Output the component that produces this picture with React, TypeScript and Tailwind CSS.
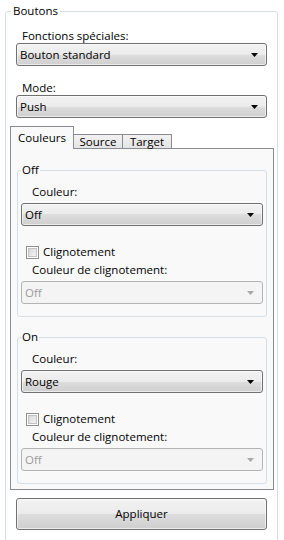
import React from 'react';

function Arrow({ disabled }: { disabled?: boolean }) {
  return (
    <svg width="7" height="4" viewBox="0 0 7 4" className="shrink-0">
      <polygon points="0,0 7,0 3.5,4" fill={disabled ? '#a8a8a8' : '#000'} />
    </svg>
  );
}

function Combo({ value, disabled }: { value: string; disabled?: boolean }) {
  if (disabled) {
    return (
      <div className="flex h-[23px] items-center justify-between rounded-[3px] border border-[#b3b3b3] bg-[#f4f4f4] pl-[3px] pr-[8px] text-[#9c9c9c]">
        <span>{value}</span>
        <Arrow disabled />
      </div>
    );
  }
  return (
    <div className="flex h-[23px] items-center justify-between rounded-[3px] border border-[#707070] bg-[linear-gradient(180deg,#f2f2f2_0%,#ebebeb_50%,#dddddd_50%,#cfcfcf_100%)] pl-[3px] pr-[8px] shadow-[inset_0_0_0_1px_rgba(255,255,255,0.6)]">
      <span>{value}</span>
      <Arrow />
    </div>
  );
}

function CheckBox({ label }: { label: string }) {
  return (
    <div className="flex h-[16px] items-center gap-[4px] pl-[5px] leading-[16px]">
      <div className="flex h-[13px] w-[13px] items-center justify-center border border-[#8e8f8f] bg-white">
        <div className="h-[9px] w-[9px] border border-[#c2c2c2] bg-[linear-gradient(135deg,#d8d8d8_0%,#f4f4f4_100%)]" />
      </div>
      <span>{label}</span>
    </div>
  );
}

function ColorGroup({ title, color }: { title: string; color: string }) {
  return (
    <fieldset className="mx-[6px] rounded-[3px] border border-[#d5dfe5] px-[3px] pb-[12px]">
      <legend className="px-[1px] leading-[16px]">{title}</legend>
      <div className="mt-[6px] pl-[11px] leading-[15px]">Couleur:</div>
      <div className="mt-[4px]">
        <Combo value={color} />
      </div>
      <div className="mt-[18px]">
        <CheckBox label="Clignotement" />
      </div>
      <div className="mt-[2px] pl-[11px] leading-[15px]">Couleur de clignotement:</div>
      <div className="mt-[4px]">
        <Combo value="Off" disabled />
      </div>
    </fieldset>
  );
}

export default function App() {
  return (
    <div className="h-[540px] w-[284px] overflow-hidden bg-white pt-[3px] font-['Open_Sans',sans-serif] text-[11.5px] text-black">
      <fieldset className="ml-[5px] h-[560px] w-[273px] rounded-[3px] border border-[#d5dfe5] px-[4px]">
        <legend className="ml-[1px] px-[2px] leading-[16px]">Boutons</legend>

        <div className="mt-[9px] pl-[12px] leading-[15px]">Fonctions spéciales:</div>
        <div className="mx-[6px]">
          <Combo value="Bouton standard" />
        </div>

        <div className="mt-[14px] pl-[12px] leading-[15px]">Mode:</div>
        <div className="mx-[6px]">
          <Combo value="Push" />
        </div>

        {/* onglets */}
        <div className="mr-[-1px] mt-[8px]">
          <div className="flex h-[22px] items-end">
            <div className="relative z-10 mb-[-1px] flex h-[23px] w-[64px] items-start justify-center border border-b-0 border-[#898c95] bg-[#f9f9f9] pt-[3px] leading-[16px]">
              Couleurs
            </div>
            <div className="flex h-[14px] w-[49px] items-center justify-center border border-b-0 border-l-0 border-[#898c95] bg-[linear-gradient(180deg,#f2f2f2_0%,#e4e4e4_100%)] leading-[14px]">
              Source
            </div>
            <div className="flex h-[14px] w-[49px] items-center justify-center border border-b-0 border-l-0 border-[#898c95] bg-[linear-gradient(180deg,#f2f2f2_0%,#e4e4e4_100%)] leading-[14px]">
              Target
            </div>
          </div>
          <div className="flex h-[342px] flex-col border border-[#898c95] bg-[#f9f9f9] pt-[13px]">
            <ColorGroup title="Off" color="Off" />
            <div className="mt-[12px]">
              <ColorGroup title="On" color="Rouge" />
            </div>
          </div>
        </div>

        <div className="mx-[6px] mt-[8px]">
          <button className="flex h-[32px] w-full items-center justify-center rounded-[3px] border border-[#707070] bg-[linear-gradient(180deg,#f2f2f2_0%,#ebebeb_50%,#dddddd_50%,#cfcfcf_100%)] shadow-[inset_0_0_0_1px_rgba(255,255,255,0.6)]">
            Appliquer
          </button>
        </div>
      </fieldset>
    </div>
  );
}
